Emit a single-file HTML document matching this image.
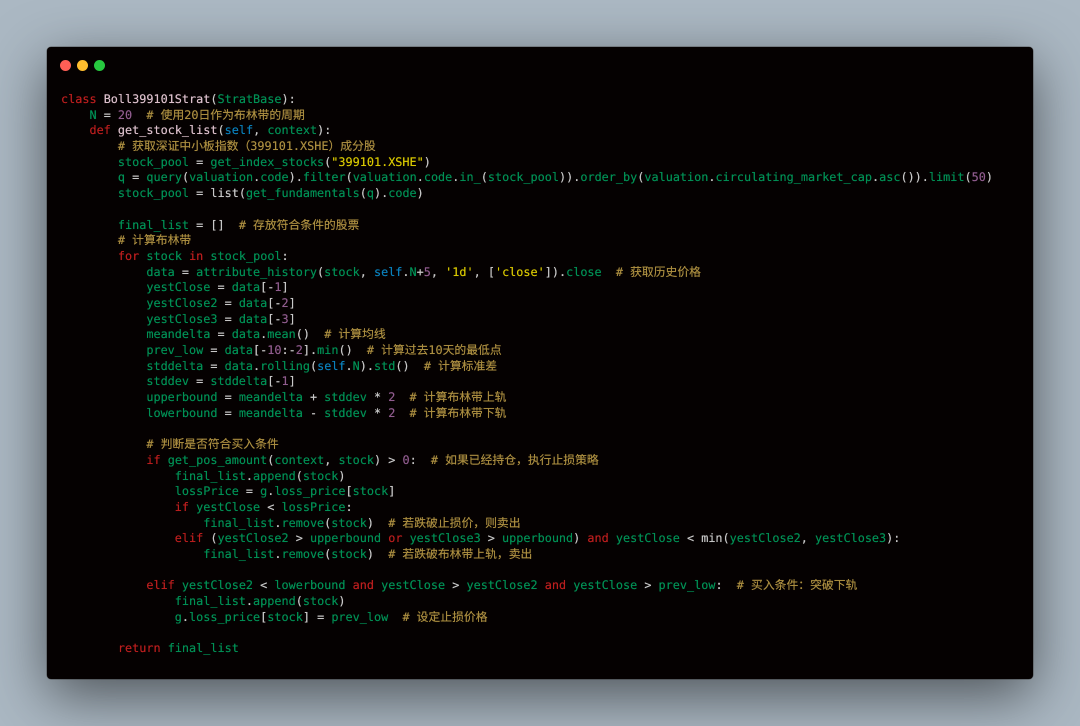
<!DOCTYPE html>
<html><head><meta charset="utf-8"><style>
html,body{margin:0;padding:0;width:1080px;height:726px;overflow:hidden;background:#abb8c3}
#w{position:absolute;left:47px;top:47px;width:986px;height:632px;background:#050101;border-radius:4px;box-shadow:0 17px 58px rgba(0,0,0,.55),0 0 0 .5px rgba(70,70,70,.7)}
.d{position:absolute;top:59.5px;width:11px;height:11px;border-radius:50%}
pre{position:absolute;left:61px;top:92px;margin:0;font:11.82px/15.69px "DejaVu Sans Mono","Noto Sans CJK SC",monospace;text-rendering:geometricPrecision;color:#c8c8c8;text-shadow:0 0 .4px currentColor;filter:blur(.2px)}
.g{color:#009055}.r{color:#bb1e1e}.c{color:#ab8e40}.p{color:#905c8e}.b{color:#0a80bc}.y{color:#d8c800}.n{color:#dcc0cc}
</style></head><body>
<div id="w"></div>
<div class="d" style="left:59.5px;background:#ff5f56"></div>
<div class="d" style="left:76.5px;background:#ffbd2e"></div>
<div class="d" style="left:93.5px;background:#27c93f"></div>
<pre><span class="r">class</span> <span class="n">Boll399101Strat</span>(<span class="g">StratBase</span>):
    <span class="g">N</span> = <span class="p">20</span>  <span class="c"># 使用20日作为布林带的周期</span>
    <span class="r">def</span> <span class="n">get_stock_list</span>(<span class="b">self</span>, <span class="g">context</span>):
        <span class="c"># 获取深证中小板指数（399101.XSHE）成分股</span>
        <span class="g">stock_pool</span> = <span class="g">get_index_stocks</span>(<span class="y">"399101.XSHE"</span>)
        <span class="g">q</span> = <span class="g">query</span>(<span class="g">valuation</span>.<span class="g">code</span>).<span class="g">filter</span>(<span class="g">valuation</span>.<span class="g">code</span>.<span class="g">in_</span>(<span class="g">stock_pool</span>)).<span class="g">order_by</span>(<span class="g">valuation</span>.<span class="g">circulating_market_cap</span>.<span class="g">asc</span>()).<span class="g">limit</span>(<span class="p">50</span>)
        <span class="g">stock_pool</span> = list(<span class="g">get_fundamentals</span>(<span class="g">q</span>).<span class="g">code</span>)

        <span class="g">final_list</span> = []  <span class="c"># 存放符合条件的股票</span>
        <span class="c"># 计算布林带</span>
        <span class="r">for</span> <span class="g">stock</span> <span class="r">in</span> <span class="g">stock_pool</span>:
            <span class="g">data</span> = <span class="g">attribute_history</span>(<span class="g">stock</span>, <span class="b">self</span>.<span class="g">N</span>+<span class="p">5</span>, <span class="y">'1d'</span>, [<span class="y">'close'</span>]).<span class="g">close</span>  <span class="c"># 获取历史价格</span>
            <span class="g">yestClose</span> = <span class="g">data</span>[-<span class="p">1</span>]
            <span class="g">yestClose2</span> = <span class="g">data</span>[-<span class="p">2</span>]
            <span class="g">yestClose3</span> = <span class="g">data</span>[-<span class="p">3</span>]
            <span class="g">meandelta</span> = <span class="g">data</span>.<span class="g">mean</span>()  <span class="c"># 计算均线</span>
            <span class="g">prev_low</span> = <span class="g">data</span>[-<span class="p">10</span>:-<span class="p">2</span>].<span class="g">min</span>()  <span class="c"># 计算过去10天的最低点</span>
            <span class="g">stddelta</span> = <span class="g">data</span>.<span class="g">rolling</span>(<span class="b">self</span>.<span class="g">N</span>).<span class="g">std</span>()  <span class="c"># 计算标准差</span>
            <span class="g">stddev</span> = <span class="g">stddelta</span>[-<span class="p">1</span>]
            <span class="g">upperbound</span> = <span class="g">meandelta</span> + <span class="g">stddev</span> * <span class="p">2</span>  <span class="c"># 计算布林带上轨</span>
            <span class="g">lowerbound</span> = <span class="g">meandelta</span> - <span class="g">stddev</span> * <span class="p">2</span>  <span class="c"># 计算布林带下轨</span>

            <span class="c"># 判断是否符合买入条件</span>
            <span class="r">if</span> <span class="g">get_pos_amount</span>(<span class="g">context</span>, <span class="g">stock</span>) &gt; <span class="p">0</span>:  <span class="c"># 如果已经持仓，执行止损策略</span>
                <span class="g">final_list</span>.<span class="g">append</span>(<span class="g">stock</span>)
                <span class="g">lossPrice</span> = <span class="g">g</span>.<span class="g">loss_price</span>[<span class="g">stock</span>]
                <span class="r">if</span> <span class="g">yestClose</span> &lt; <span class="g">lossPrice</span>:
                    <span class="g">final_list</span>.<span class="g">remove</span>(<span class="g">stock</span>)  <span class="c"># 若跌破止损价，则卖出</span>
                <span class="r">elif</span> (<span class="g">yestClose2</span> &gt; <span class="g">upperbound</span> <span class="r">or</span> <span class="g">yestClose3</span> &gt; <span class="g">upperbound</span>) <span class="r">and</span> <span class="g">yestClose</span> &lt; min(<span class="g">yestClose2</span>, <span class="g">yestClose3</span>):
                    <span class="g">final_list</span>.<span class="g">remove</span>(<span class="g">stock</span>)  <span class="c"># 若跌破布林带上轨，卖出</span>

            <span class="r">elif</span> <span class="g">yestClose2</span> &lt; <span class="g">lowerbound</span> <span class="r">and</span> <span class="g">yestClose</span> &gt; <span class="g">yestClose2</span> <span class="r">and</span> <span class="g">yestClose</span> &gt; <span class="g">prev_low</span>:  <span class="c"># 买入条件：突破下轨</span>
                <span class="g">final_list</span>.<span class="g">append</span>(<span class="g">stock</span>)
                <span class="g">g</span>.<span class="g">loss_price</span>[<span class="g">stock</span>] = <span class="g">prev_low</span>  <span class="c"># 设定止损价格</span>

        <span class="r">return</span> <span class="g">final_list</span></pre>
</body></html>
